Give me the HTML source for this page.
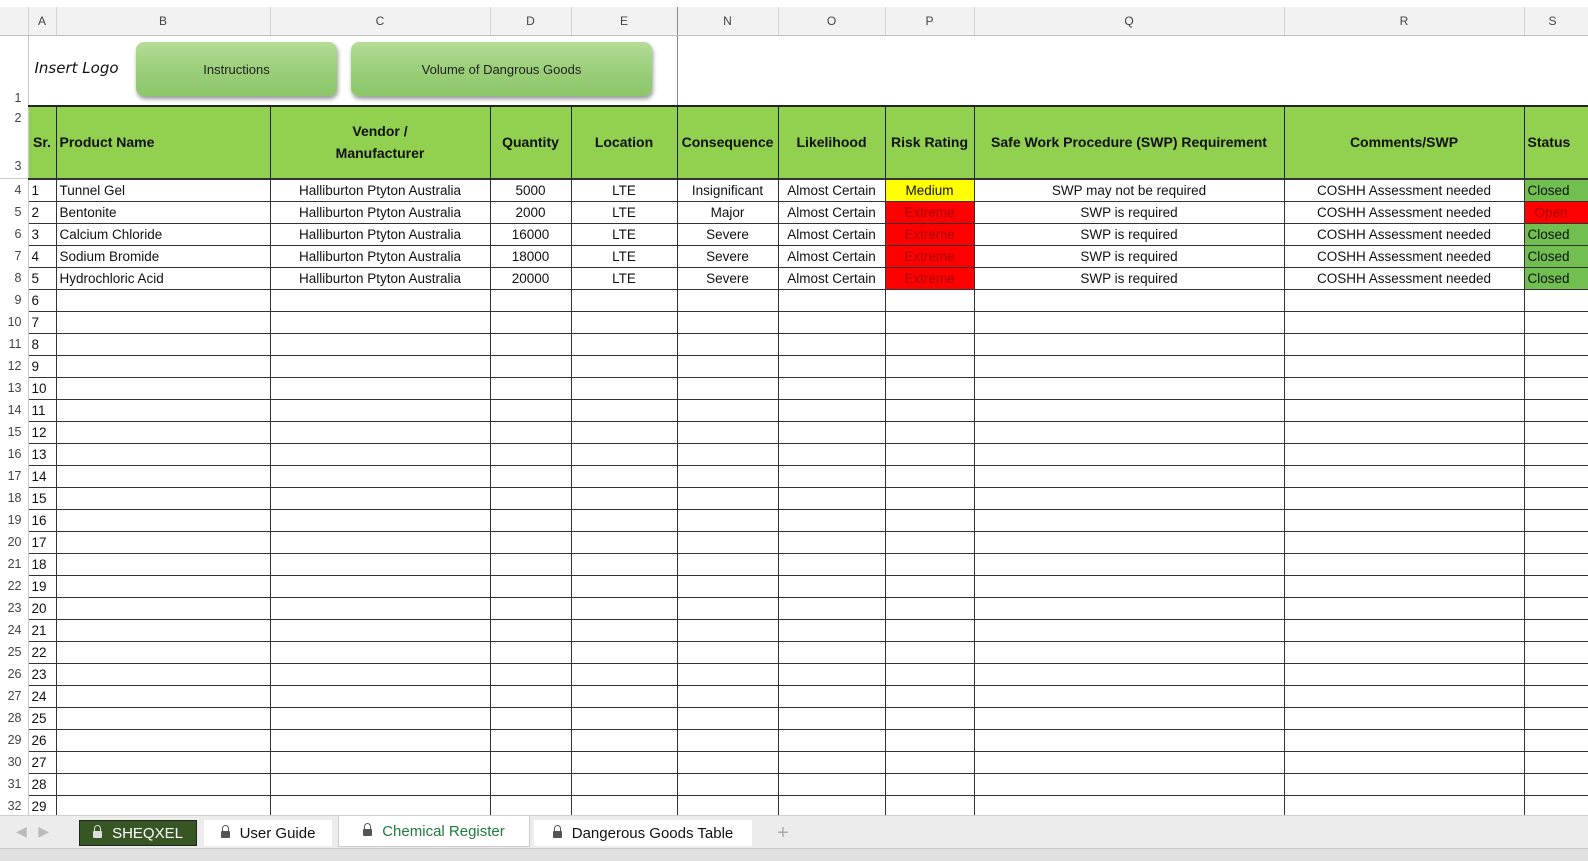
<!DOCTYPE html>
<html><head><meta charset="utf-8"><style>
body{margin:0;width:1588px;height:860px;overflow:hidden;background:#fff;font-family:"Liberation Sans",sans-serif;position:relative}
.top{position:absolute;left:0;top:0;width:1588px;height:7px;background:#fff;border-bottom:1px solid #c8c8c8}
table{position:absolute;left:0;top:7px;border-collapse:collapse;table-layout:fixed;width:1624px}
td{padding:0;font-size:13.5px;color:#111;white-space:nowrap;overflow:hidden;text-align:center}
.ch td{height:28px;background:#f2f2f2;border-right:1px solid #d4d4d4;border-bottom:1px solid #c0c0c0;color:#444;font-size:12px}
.rn{background:#fff;color:#444;font-size:12.5px;text-align:right;padding-right:6px;border-right:1px solid #c8c8c8}
.r1 td{height:63px;line-height:16px}
.hd td.g{background:#92d050;font-weight:bold;font-size:14px;border:1px solid #222;border-top:2px solid #222;border-bottom:2px solid #333;white-space:normal;line-height:22px}
.d td.c{height:21px;border:1px solid #333;border-top:0}
.l{text-align:left!important;padding-left:3px!important}
.y{background:#ffff00}.rd{background:#ff0000;color:#a00!important}.gr{background:#70bf50;text-align:left!important;padding-left:3px!important}
.btn{position:absolute;top:42px;height:54px;border-radius:8px;background:linear-gradient(#b4dc98,#9ccf7a 50%,#8cc56a);box-shadow:1px 3px 4px #999;display:flex;align-items:center;justify-content:center;font-size:13px;color:#222}
.tabs{position:absolute;left:0;top:815px;width:1588px;height:33px;background:#ececec;border-top:1px solid #d0d0d0}
.tab{position:absolute;top:4px;height:26px;background:#fff;font-size:15px;display:flex;align-items:center;justify-content:center;color:#111}
.bot{position:absolute;left:0;top:848px;width:1588px;height:12px;background:#e0e0e0;border-top:1px solid #c8c8c8}
.lk{display:inline-block;width:9px;height:7px;background:currentColor;border-radius:1px;margin-right:10px;position:relative;top:1px}
.lk:before{content:"";position:absolute;left:1px;top:-6px;width:5px;height:6px;border:1.5px solid currentColor;border-bottom:0;border-radius:4px 4px 0 0}
</style></head><body>
<div class="top"></div>
<table>
<colgroup><col style="width:28px"><col style="width:28px"><col style="width:214px"><col style="width:220px"><col style="width:81px"><col style="width:106px"><col style="width:101px"><col style="width:107px"><col style="width:89px"><col style="width:310px"><col style="width:240px"><col style="width:100px"></colgroup>
<tr class="ch"><td style="background:#f2f2f2"></td><td>A</td><td>B</td><td>C</td><td>D</td><td style="border-right:1px solid #888">E</td><td>N</td><td>O</td><td>P</td><td>Q</td><td>R</td><td style="text-align:left;padding-left:24px">S</td></tr>
<tr class="r1"><td class="rn" style="vertical-align:bottom">1</td><td colspan="2" class="l" style="font-family:'DejaVu Sans',sans-serif;font-style:italic;font-size:15px;padding-left:6px!important;vertical-align:middle;padding-bottom:6px">Insert Logo</td><td></td><td></td><td style="border-right:1px solid #888"></td><td colspan="6"></td></tr>
<tr class="hd"><td class="rn" style="height:71px;vertical-align:top;line-height:24px;border-bottom:1px solid #c8c8c8">2<br><br>3</td><td class="g">Sr.</td><td class="g l">Product Name</td><td class="g">Vendor /<br>Manufacturer</td><td class="g">Quantity</td><td class="g">Location</td><td class="g">Consequence</td><td class="g">Likelihood</td><td class="g">Risk Rating</td><td class="g">Safe Work Procedure (SWP) Requirement</td><td class="g">Comments/SWP</td><td class="g l">Status</td></tr>
<tr class="d"><td class="rn">4</td><td class="c l">1</td><td class="c l">Tunnel Gel</td><td class="c">Halliburton Ptyton Australia</td><td class="c">5000</td><td class="c">LTE</td><td class="c">Insignificant</td><td class="c">Almost Certain</td><td class="c y">Medium</td><td class="c">SWP may not be required</td><td class="c">COSHH Assessment needed</td><td class="c gr">Closed</td></tr>
<tr class="d"><td class="rn">5</td><td class="c l">2</td><td class="c l">Bentonite</td><td class="c">Halliburton Ptyton Australia</td><td class="c">2000</td><td class="c">LTE</td><td class="c">Major</td><td class="c">Almost Certain</td><td class="c rd">Extreme</td><td class="c">SWP is required</td><td class="c">COSHH Assessment needed</td><td class="c rd" style="text-align:left;padding-left:10px">Open</td></tr>
<tr class="d"><td class="rn">6</td><td class="c l">3</td><td class="c l">Calcium Chloride</td><td class="c">Halliburton Ptyton Australia</td><td class="c">16000</td><td class="c">LTE</td><td class="c">Severe</td><td class="c">Almost Certain</td><td class="c rd">Extreme</td><td class="c">SWP is required</td><td class="c">COSHH Assessment needed</td><td class="c gr">Closed</td></tr>
<tr class="d"><td class="rn">7</td><td class="c l">4</td><td class="c l">Sodium Bromide</td><td class="c">Halliburton Ptyton Australia</td><td class="c">18000</td><td class="c">LTE</td><td class="c">Severe</td><td class="c">Almost Certain</td><td class="c rd">Extreme</td><td class="c">SWP is required</td><td class="c">COSHH Assessment needed</td><td class="c gr">Closed</td></tr>
<tr class="d"><td class="rn">8</td><td class="c l">5</td><td class="c l">Hydrochloric Acid</td><td class="c">Halliburton Ptyton Australia</td><td class="c">20000</td><td class="c">LTE</td><td class="c">Severe</td><td class="c">Almost Certain</td><td class="c rd">Extreme</td><td class="c">SWP is required</td><td class="c">COSHH Assessment needed</td><td class="c gr">Closed</td></tr>
<tr class="d"><td class="rn">9</td><td class="c l">6</td><td class="c"></td><td class="c"></td><td class="c"></td><td class="c"></td><td class="c"></td><td class="c"></td><td class="c"></td><td class="c"></td><td class="c"></td><td class="c"></td></tr>
<tr class="d"><td class="rn">10</td><td class="c l">7</td><td class="c"></td><td class="c"></td><td class="c"></td><td class="c"></td><td class="c"></td><td class="c"></td><td class="c"></td><td class="c"></td><td class="c"></td><td class="c"></td></tr>
<tr class="d"><td class="rn">11</td><td class="c l">8</td><td class="c"></td><td class="c"></td><td class="c"></td><td class="c"></td><td class="c"></td><td class="c"></td><td class="c"></td><td class="c"></td><td class="c"></td><td class="c"></td></tr>
<tr class="d"><td class="rn">12</td><td class="c l">9</td><td class="c"></td><td class="c"></td><td class="c"></td><td class="c"></td><td class="c"></td><td class="c"></td><td class="c"></td><td class="c"></td><td class="c"></td><td class="c"></td></tr>
<tr class="d"><td class="rn">13</td><td class="c l">10</td><td class="c"></td><td class="c"></td><td class="c"></td><td class="c"></td><td class="c"></td><td class="c"></td><td class="c"></td><td class="c"></td><td class="c"></td><td class="c"></td></tr>
<tr class="d"><td class="rn">14</td><td class="c l">11</td><td class="c"></td><td class="c"></td><td class="c"></td><td class="c"></td><td class="c"></td><td class="c"></td><td class="c"></td><td class="c"></td><td class="c"></td><td class="c"></td></tr>
<tr class="d"><td class="rn">15</td><td class="c l">12</td><td class="c"></td><td class="c"></td><td class="c"></td><td class="c"></td><td class="c"></td><td class="c"></td><td class="c"></td><td class="c"></td><td class="c"></td><td class="c"></td></tr>
<tr class="d"><td class="rn">16</td><td class="c l">13</td><td class="c"></td><td class="c"></td><td class="c"></td><td class="c"></td><td class="c"></td><td class="c"></td><td class="c"></td><td class="c"></td><td class="c"></td><td class="c"></td></tr>
<tr class="d"><td class="rn">17</td><td class="c l">14</td><td class="c"></td><td class="c"></td><td class="c"></td><td class="c"></td><td class="c"></td><td class="c"></td><td class="c"></td><td class="c"></td><td class="c"></td><td class="c"></td></tr>
<tr class="d"><td class="rn">18</td><td class="c l">15</td><td class="c"></td><td class="c"></td><td class="c"></td><td class="c"></td><td class="c"></td><td class="c"></td><td class="c"></td><td class="c"></td><td class="c"></td><td class="c"></td></tr>
<tr class="d"><td class="rn">19</td><td class="c l">16</td><td class="c"></td><td class="c"></td><td class="c"></td><td class="c"></td><td class="c"></td><td class="c"></td><td class="c"></td><td class="c"></td><td class="c"></td><td class="c"></td></tr>
<tr class="d"><td class="rn">20</td><td class="c l">17</td><td class="c"></td><td class="c"></td><td class="c"></td><td class="c"></td><td class="c"></td><td class="c"></td><td class="c"></td><td class="c"></td><td class="c"></td><td class="c"></td></tr>
<tr class="d"><td class="rn">21</td><td class="c l">18</td><td class="c"></td><td class="c"></td><td class="c"></td><td class="c"></td><td class="c"></td><td class="c"></td><td class="c"></td><td class="c"></td><td class="c"></td><td class="c"></td></tr>
<tr class="d"><td class="rn">22</td><td class="c l">19</td><td class="c"></td><td class="c"></td><td class="c"></td><td class="c"></td><td class="c"></td><td class="c"></td><td class="c"></td><td class="c"></td><td class="c"></td><td class="c"></td></tr>
<tr class="d"><td class="rn">23</td><td class="c l">20</td><td class="c"></td><td class="c"></td><td class="c"></td><td class="c"></td><td class="c"></td><td class="c"></td><td class="c"></td><td class="c"></td><td class="c"></td><td class="c"></td></tr>
<tr class="d"><td class="rn">24</td><td class="c l">21</td><td class="c"></td><td class="c"></td><td class="c"></td><td class="c"></td><td class="c"></td><td class="c"></td><td class="c"></td><td class="c"></td><td class="c"></td><td class="c"></td></tr>
<tr class="d"><td class="rn">25</td><td class="c l">22</td><td class="c"></td><td class="c"></td><td class="c"></td><td class="c"></td><td class="c"></td><td class="c"></td><td class="c"></td><td class="c"></td><td class="c"></td><td class="c"></td></tr>
<tr class="d"><td class="rn">26</td><td class="c l">23</td><td class="c"></td><td class="c"></td><td class="c"></td><td class="c"></td><td class="c"></td><td class="c"></td><td class="c"></td><td class="c"></td><td class="c"></td><td class="c"></td></tr>
<tr class="d"><td class="rn">27</td><td class="c l">24</td><td class="c"></td><td class="c"></td><td class="c"></td><td class="c"></td><td class="c"></td><td class="c"></td><td class="c"></td><td class="c"></td><td class="c"></td><td class="c"></td></tr>
<tr class="d"><td class="rn">28</td><td class="c l">25</td><td class="c"></td><td class="c"></td><td class="c"></td><td class="c"></td><td class="c"></td><td class="c"></td><td class="c"></td><td class="c"></td><td class="c"></td><td class="c"></td></tr>
<tr class="d"><td class="rn">29</td><td class="c l">26</td><td class="c"></td><td class="c"></td><td class="c"></td><td class="c"></td><td class="c"></td><td class="c"></td><td class="c"></td><td class="c"></td><td class="c"></td><td class="c"></td></tr>
<tr class="d"><td class="rn">30</td><td class="c l">27</td><td class="c"></td><td class="c"></td><td class="c"></td><td class="c"></td><td class="c"></td><td class="c"></td><td class="c"></td><td class="c"></td><td class="c"></td><td class="c"></td></tr>
<tr class="d"><td class="rn">31</td><td class="c l">28</td><td class="c"></td><td class="c"></td><td class="c"></td><td class="c"></td><td class="c"></td><td class="c"></td><td class="c"></td><td class="c"></td><td class="c"></td><td class="c"></td></tr>
<tr class="d"><td class="rn">32</td><td class="c l">29</td><td class="c"></td><td class="c"></td><td class="c"></td><td class="c"></td><td class="c"></td><td class="c"></td><td class="c"></td><td class="c"></td><td class="c"></td><td class="c"></td></tr>
</table>
<div class="btn" style="left:136px;width:201px">Instructions</div>
<div class="btn" style="left:351px;width:301px">Volume of Dangrous Goods</div>
<div class="tabs">
<div style="position:absolute;left:16px;top:7px;color:#bbb;font-size:14px">&#9664;&nbsp;&nbsp;&nbsp;&#9654;</div>
<div class="tab" style="left:79px;width:116px;background:#375623;color:#fff;border:1px solid #222;height:24px"><span class="lk" style="color:#ddd"></span>SHEQXEL</div>
<div class="tab" style="left:204px;width:128px"><span class="lk" style="color:#555"></span>User Guide</div>
<div class="tab" style="left:338px;width:190px;top:0;height:30px;border:1px solid #ccc;border-top:0;color:#1e7b3c"><span class="lk" style="color:#555"></span>Chemical Register</div>
<div class="tab" style="left:534px;width:218px"><span class="lk" style="color:#555"></span>Dangerous Goods Table</div>
<div class="tab" style="left:760px;width:46px;color:#aaa;font-size:20px;background:#ececec">+</div>
</div>
<div class="bot"></div>
</body></html>
